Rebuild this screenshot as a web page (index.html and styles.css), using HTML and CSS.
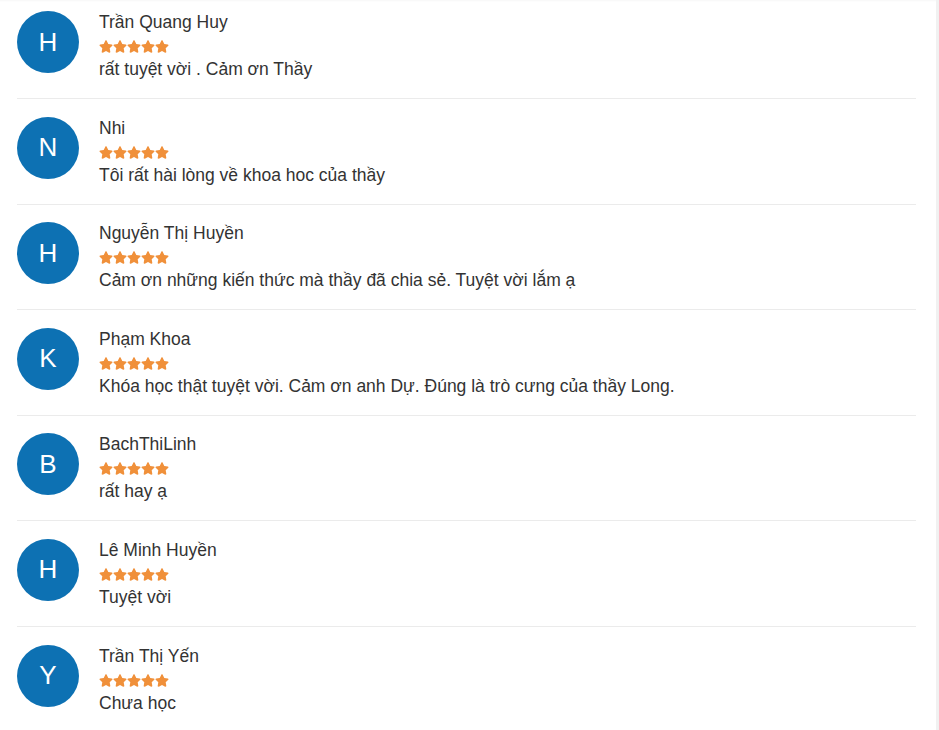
FILE: index.html
```html
<!DOCTYPE html>
<html lang="vi">
<head>
<meta charset="utf-8">
<title>Đánh giá</title>
<link rel="stylesheet" href="styles.css">
</head>
<body>
<svg width="0" height="0" class="defs">
  <defs>
    <symbol id="star" viewBox="0 0 576 512">
      <path d="M259.3 17.8L194 150.2 47.9 171.5c-26.2 3.8-36.7 36.1-17.7 54.6l105.7 103-25 145.5c-4.5 26.3 23.200 46 46.4 33.7L288 439.6l130.7 68.7c23.2 12.2 50.9-7.4 46.4-33.7l-25-145.5 105.7-103c19-18.5 8.5-50.8-17.7-54.6L382 150.2 316.7 17.8c-11.7-23.6-45.6-23.9-57.4 0z"/>
    </symbol>
  </defs>
</svg>
<div class="card">
  <div class="review first">
    <div class="avatar">H</div>
    <div class="body">
      <div class="name">Trần Quang Huy</div>
      <div class="stars"><svg><use href="#star"/></svg><svg><use href="#star"/></svg><svg><use href="#star"/></svg><svg><use href="#star"/></svg><svg><use href="#star"/></svg></div>
      <div class="text">rất tuyệt vời . Cảm ơn Thầy</div>
    </div>
  </div>
  <div class="review">
    <div class="avatar">N</div>
    <div class="body">
      <div class="name">Nhi</div>
      <div class="stars"><svg><use href="#star"/></svg><svg><use href="#star"/></svg><svg><use href="#star"/></svg><svg><use href="#star"/></svg><svg><use href="#star"/></svg></div>
      <div class="text">Tôi rất hài lòng về khoa hoc của thầy</div>
    </div>
  </div>
  <div class="review">
    <div class="avatar">H</div>
    <div class="body">
      <div class="name">Nguyễn Thị Huyền</div>
      <div class="stars"><svg><use href="#star"/></svg><svg><use href="#star"/></svg><svg><use href="#star"/></svg><svg><use href="#star"/></svg><svg><use href="#star"/></svg></div>
      <div class="text">Cảm ơn những kiến thức mà thầy đã chia sẻ. Tuyệt vời lắm ạ</div>
    </div>
  </div>
  <div class="review">
    <div class="avatar">K</div>
    <div class="body">
      <div class="name">Phạm Khoa</div>
      <div class="stars"><svg><use href="#star"/></svg><svg><use href="#star"/></svg><svg><use href="#star"/></svg><svg><use href="#star"/></svg><svg><use href="#star"/></svg></div>
      <div class="text">Khóa học thật tuyệt vời. Cảm ơn anh Dự. Đúng là trò cưng của thầy Long.</div>
    </div>
  </div>
  <div class="review">
    <div class="avatar">B</div>
    <div class="body">
      <div class="name">BachThiLinh</div>
      <div class="stars"><svg><use href="#star"/></svg><svg><use href="#star"/></svg><svg><use href="#star"/></svg><svg><use href="#star"/></svg><svg><use href="#star"/></svg></div>
      <div class="text">rất hay ạ</div>
    </div>
  </div>
  <div class="review">
    <div class="avatar">H</div>
    <div class="body">
      <div class="name">Lê Minh Huyền</div>
      <div class="stars"><svg><use href="#star"/></svg><svg><use href="#star"/></svg><svg><use href="#star"/></svg><svg><use href="#star"/></svg><svg><use href="#star"/></svg></div>
      <div class="text">Tuyệt vời</div>
    </div>
  </div>
  <div class="review last">
    <div class="avatar">Y</div>
    <div class="body">
      <div class="name">Trần Thị Yến</div>
      <div class="stars"><svg><use href="#star"/></svg><svg><use href="#star"/></svg><svg><use href="#star"/></svg><svg><use href="#star"/></svg><svg><use href="#star"/></svg></div>
      <div class="text">Chưa học</div>
    </div>
  </div>
</div>
</body>
</html>
```
FILE: styles.css
```css
html, body {
  margin: 0;
  padding: 0;
}
body {
  background: #f1f1f1;
  font-family: "Liberation Sans", Arial, sans-serif;
  color: #333;
  overflow: hidden;
}
.defs {
  position: absolute;
  width: 0;
  height: 0;
}
.card {
  width: 936px;
  height: 730px;
  background: #fff;
  box-shadow: inset 0 2px 2px -1px rgba(0, 0, 0, 0.035);
  padding: 0 20px 0 17px;
  box-sizing: border-box;
}
.review {
  display: flex;
  align-items: flex-start;
  gap: 20px;
  padding: 18.6px 0 19px;
  border-bottom: 1px solid #ebebeb;
}
.review .avatar {
  margin-top: -1px;
}
.review.first {
  padding-top: 12px;
}
.review.last {
  border-bottom: none;
}
.avatar {
  width: 62px;
  height: 62px;
  flex: 0 0 62px;
  border-radius: 50%;
  background: #0d71b3;
  color: #fff;
  font-size: 26px;
  display: flex;
  align-items: center;
  justify-content: center;
}
.body {
  display: flex;
  flex-direction: column;
}
.name {
  font-size: 17.5px;
  line-height: 20px;
  color: #333;
}
.stars {
  display: flex;
  height: 13px;
  margin-top: 8px;
}
.stars svg {
  width: 14px;
  height: 13px;
  fill: #f0903a;
}
.text {
  font-size: 17.5px;
  line-height: 20px;
  margin-top: 6px;
  color: #333;
}
```
